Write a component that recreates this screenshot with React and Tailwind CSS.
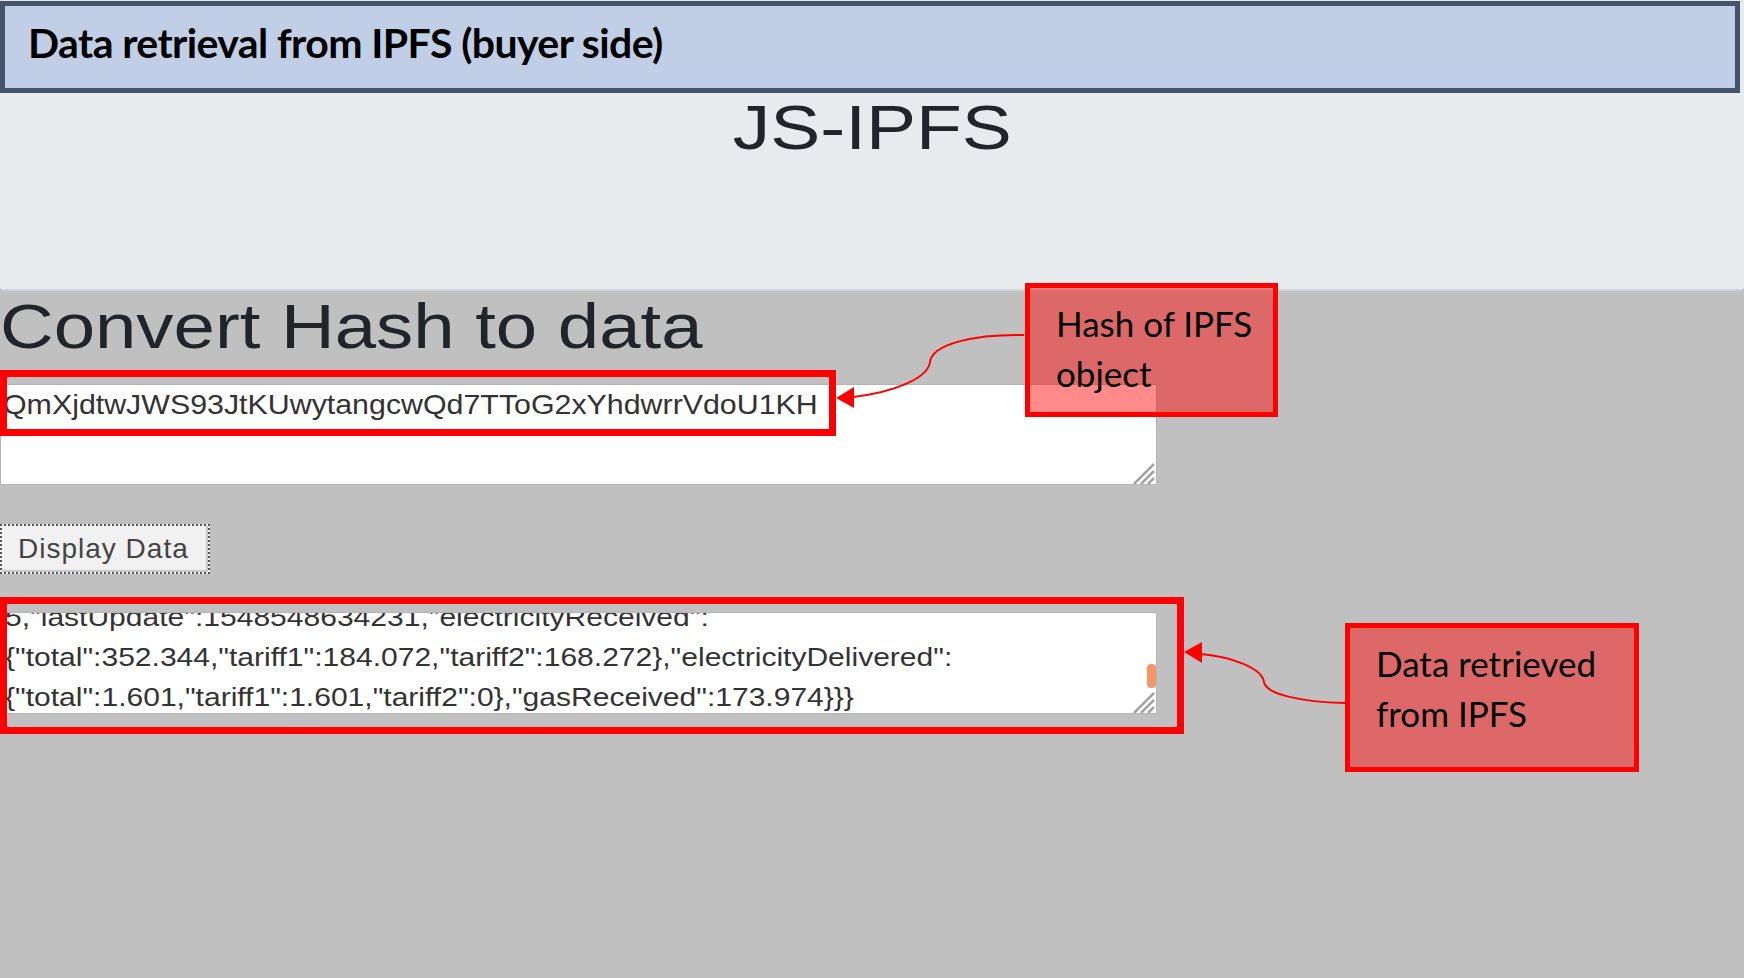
const hash = 'QmXjdtwJWS93JtKUwytangcwQd7TToG2xYhdwrrVdoU1KH';

const dataLines = [
  '5,"lastUpdate":1548548634231,"electricityReceived":',
  '{"total":352.344,"tariff1":184.072,"tariff2":168.272},"electricityDelivered":',
  '{"total":1.601,"tariff1":1.601,"tariff2":0},"gasReceived":173.974}}}',
];

function ResizeGrip() {
  return (
    <svg className="absolute bottom-0 right-0" width="26" height="24" viewBox="0 0 26 24">
      <path d="M24 4 L4 24 M24 11 L11 24 M24 18 L18 24" stroke="#a3a3a3" strokeWidth="2.5" />
    </svg>
  );
}

function Note({ className, lines }) {
  return (
    <div
      className={`absolute flex flex-col border-[5px] border-[#ff0000] bg-[rgba(255,0,0,0.46)] pl-[26px] pt-[10px] font-['Lato',sans-serif] text-[35px] leading-[50px] text-black ${className}`}
    >
      {lines.map((line) => (
        <span key={line}>{line}</span>
      ))}
    </div>
  );
}

function Arrows() {
  return (
    <svg className="pointer-events-none absolute left-0 top-0" width="1744" height="978" viewBox="0 0 1744 978">
      <path d="M1024 335 C975 334 932 344 930 362 C928 378 895 392 853 397" fill="none" stroke="#ff0000" strokeWidth="2" />
      <polygon points="836,398 854,387 854,408" fill="#ff0000" />
      <path d="M1345 703 C1300 702 1266 694 1264 682 C1262 668 1232 657 1201 654" fill="none" stroke="#ff0000" strokeWidth="2" />
      <polygon points="1184,652 1202,642 1202,663" fill="#ff0000" />
    </svg>
  );
}

export default function App() {
  return (
    <div className="relative h-[978px] w-[1744px] overflow-hidden bg-[#c0c0c0] font-['Liberation_Sans',Arial,sans-serif]">
      <section className="flex h-[291px] flex-col rounded-b border-b-2 border-[#cfd2d4] bg-[#e8ebee] pt-px">
        <header className="flex h-[92px] w-[1740px] items-center border-[5px] border-[#44546a] bg-[#c0cfe6] pb-[8px] pl-[23px]">
          <h1 className="font-['Lato',sans-serif] text-[41px] font-bold tracking-[-0.6px] text-black">
            Data retrieval from IPFS (buyer side)
          </h1>
        </header>
        <div className="mt-[3px] text-center">
          <span className="inline-block scale-x-[1.19] text-[63px] leading-none text-[#212529]">JS-IPFS</span>
        </div>
      </section>

      <main className="flex flex-col items-start pt-[4px]">
        <h2 className="origin-left scale-x-[1.18] text-[63px] leading-none text-[#212529]">Convert Hash to data</h2>

        <div className="relative mt-[26px] h-[101px] w-[1157px] border border-[#b4b4b4] bg-white pl-[2px] pt-[4px]">
          <div className="origin-left scale-x-[1.084] whitespace-nowrap text-[28px] leading-[32px] text-[#333]">{hash}</div>
          <ResizeGrip />
        </div>

        <button className="mt-[39px] flex h-[50px] w-[210px] items-center border-2 border-dotted border-[#555] bg-[#f1f1f1] pl-[16px] text-[28px] tracking-[1px] text-[#444] shadow-[inset_-2px_-2px_0_#c8c8c8]">
          Display Data
        </button>

        <div className="relative mt-[38px] h-[102px] w-[1157px] overflow-hidden border border-[#b4b4b4] bg-white pl-[4px]">
          <div className="-mt-[16px] flex origin-left scale-x-[1.155] flex-col whitespace-nowrap text-[26px] leading-[40px] text-[#333]">
            {dataLines.map((line) => (
              <span key={line}>{line}</span>
            ))}
          </div>
          <div className="absolute right-0 top-[51px] h-[24px] w-[9px] rounded-sm bg-[#f4956a]" />
          <ResizeGrip />
        </div>
      </main>

      <div className="pointer-events-none absolute left-0 top-[370px] h-[66px] w-[836px] border-[7px] border-[#ff0000]" />
      <div className="pointer-events-none absolute left-0 top-[597px] h-[137px] w-[1184px] border-[7px] border-[#ff0000]" />

      <Note className="left-[1025px] top-[283px] h-[134px] w-[253px]" lines={['Hash of IPFS', 'object']} />
      <Note className="left-[1345px] top-[623px] h-[149px] w-[294px]" lines={['Data retrieved', 'from IPFS']} />
      <Arrows />
    </div>
  );
}
